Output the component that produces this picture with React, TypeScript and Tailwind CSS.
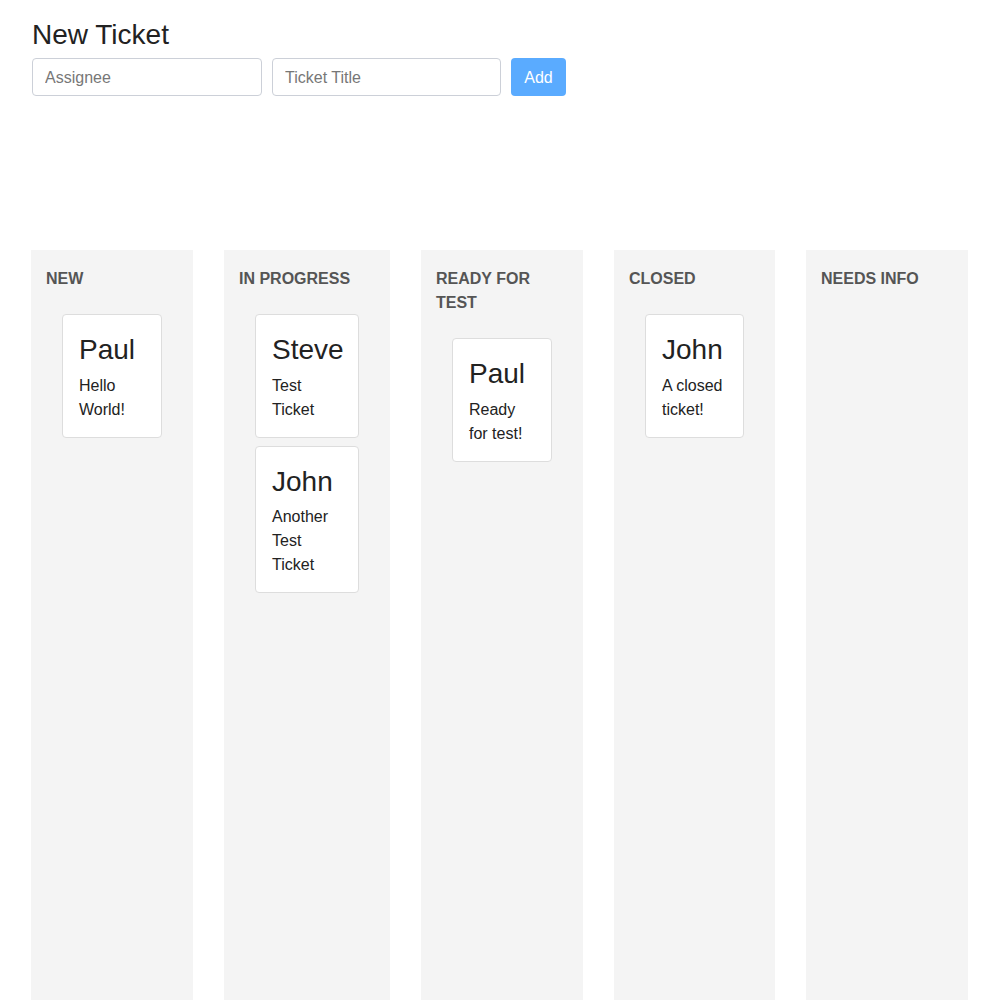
import * as React from "react";

type Ticket = { assignee: string; title: string };
type Lane = { name: string; width: string; tickets: Ticket[] };

const lanes: Lane[] = [
  { name: "New", width: "w-[162px]", tickets: [{ assignee: "Paul", title: "Hello World!" }] },
  {
    name: "In Progress",
    width: "w-[166px]",
    tickets: [
      { assignee: "Steve", title: "Test Ticket" },
      { assignee: "John", title: "Another Test Ticket" },
    ],
  },
  { name: "Ready for Test", width: "w-[162px]", tickets: [{ assignee: "Paul", title: "Ready for test!" }] },
  { name: "Closed", width: "w-[161px]", tickets: [{ assignee: "John", title: "A closed ticket!" }] },
  { name: "Needs Info", width: "w-[162px]", tickets: [] },
];

function TicketCard({ ticket }: { ticket: Ticket }) {
  return (
    <div className="mx-4 rounded border border-[#ddd] bg-white px-4 pb-[15px] pt-5 text-[#222]">
      <h3 className="mb-2 text-[28px] leading-[1.1]">{ticket.assignee}</h3>
      <p className="text-base leading-6">{ticket.title}</p>
    </div>
  );
}

export default function App() {
  return (
    <div
      className="h-[1000px] overflow-hidden bg-white pt-5"
      style={{ fontFamily: '"Liberation Sans", Arial, sans-serif' }}
    >
      <div className="pl-8">
        <h2 className="mb-[7px] text-[28px] leading-[1.1] text-[#222]">New Ticket</h2>
        <div className="flex gap-[10px]">
          <input
            className="h-[38px] w-[230px] rounded border border-[#ccd0d8] px-3 pt-[2px] text-base text-[#333] placeholder:text-[#777] outline-none"
            placeholder="Assignee"
          />
          <input
            className="h-[38px] w-[229px] rounded border border-[#ccd0d8] px-3 pt-[2px] text-base text-[#333] placeholder:text-[#777] outline-none"
            placeholder="Ticket Title"
          />
          <button className="h-[38px] w-[55px] rounded bg-[#5aabff] pt-[2px] text-base text-white">Add</button>
        </div>
      </div>

      <div className="mt-[154px] flex gap-[31px] pl-[31px]">
        {lanes.map((lane) => (
          <div key={lane.name} className={`${lane.width} h-[760px] bg-[#f4f4f4] px-[15px] pt-[17px]`}>
            <h4 className="mb-[23px] text-base font-bold uppercase leading-6 text-[#555]">{lane.name}</h4>
            <div className="flex flex-col gap-2">
              {lane.tickets.map((t) => (
                <TicketCard key={t.assignee + t.title} ticket={t} />
              ))}
            </div>
          </div>
        ))}
      </div>
    </div>
  );
}
